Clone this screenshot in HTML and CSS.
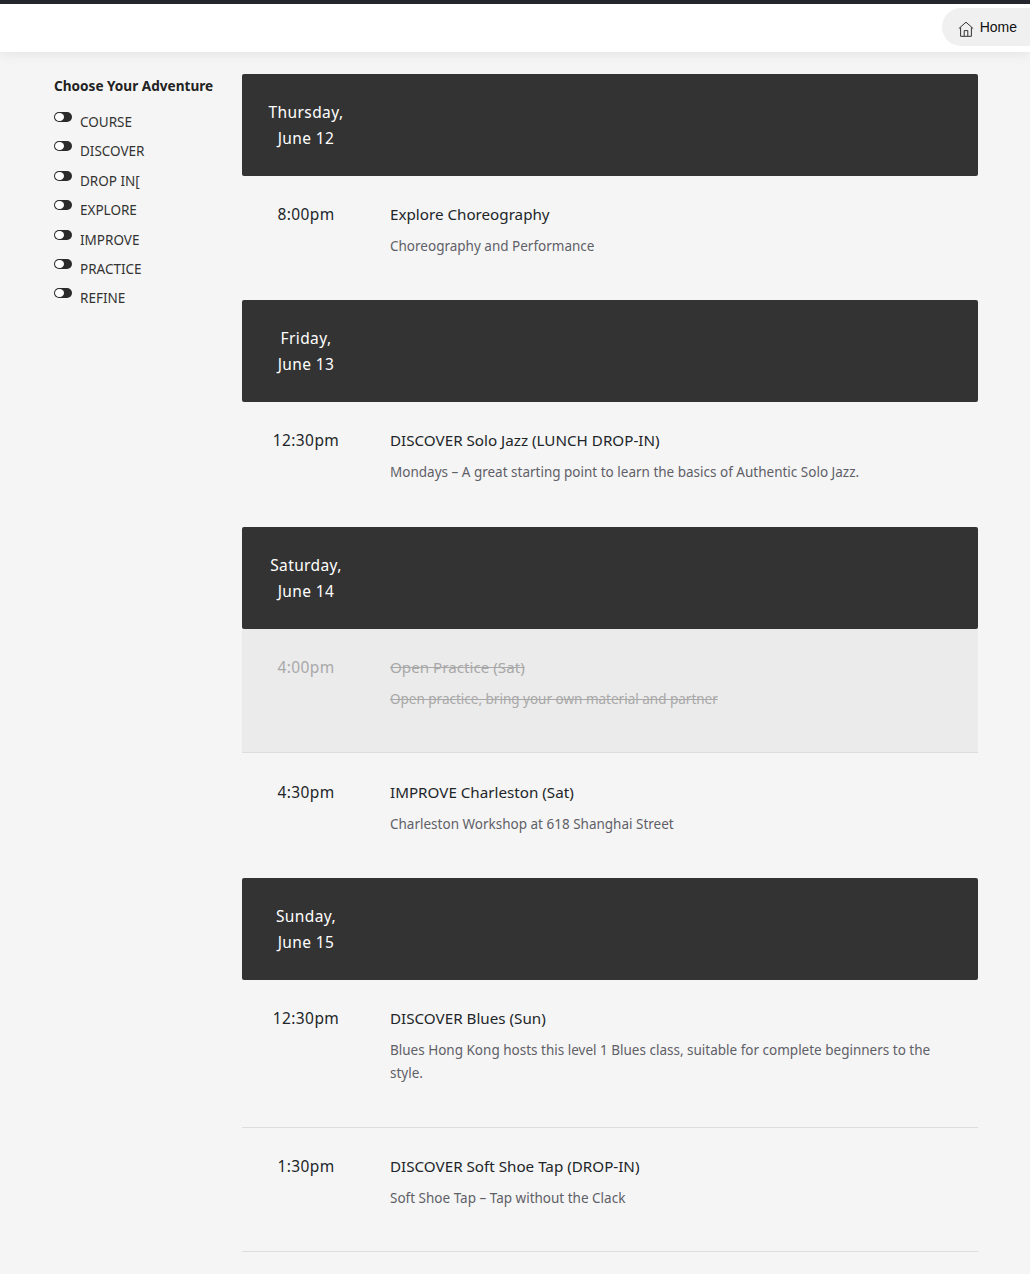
FILE: index.html
```html
<!DOCTYPE html>
<html lang="en">
<head>
    <meta charset="UTF-8">
    <meta name="viewport" content="width=device-width, initial-scale=1.0">
    <title>Schedule</title>
    <link rel="stylesheet" href="styles.css">
</head>
<body>
    <header class="topbar">
        <a href="#" class="home-btn">
            <svg class="home-icon" viewBox="0 0 16 16" width="16" height="16" fill="none" stroke="#333" stroke-width="1">
                <path d="M0.8 7.6 8 1.2l7.2 6.4"/>
                <path d="M2.6 6.4v8.9h10.8V6.4"/>
                <path d="M6.2 15.3V9.6h3.6v5.7"/>
            </svg>
            Home
        </a>
    </header>

    <div class="layout">
        <aside class="filters">
            <h2>Choose Your Adventure</h2>
            <div class="filter"><span class="toggle"></span><span class="filter-name">COURSE</span></div>
            <div class="filter"><span class="toggle"></span><span class="filter-name">DISCOVER</span></div>
            <div class="filter"><span class="toggle"></span><span class="filter-name">DROP IN[</span></div>
            <div class="filter"><span class="toggle"></span><span class="filter-name">EXPLORE</span></div>
            <div class="filter"><span class="toggle"></span><span class="filter-name">IMPROVE</span></div>
            <div class="filter"><span class="toggle"></span><span class="filter-name">PRACTICE</span></div>
            <div class="filter"><span class="toggle"></span><span class="filter-name">REFINE</span></div>
        </aside>

        <main class="schedule">
            <section class="day">
                <div class="day-head"><div class="day-date">Thursday,<br>June 12</div></div>
                <div class="row">
                    <div class="time">8:00pm</div>
                    <div class="info">
                        <div class="title">Explore Choreography</div>
                        <p class="desc">Choreography and Performance</p>
                    </div>
                </div>
            </section>

            <section class="day">
                <div class="day-head"><div class="day-date">Friday,<br>June 13</div></div>
                <div class="row">
                    <div class="time">12:30pm</div>
                    <div class="info">
                        <div class="title">DISCOVER Solo Jazz (LUNCH DROP-IN)</div>
                        <p class="desc">Mondays – A great starting point to learn the basics of Authentic Solo Jazz.</p>
                    </div>
                </div>
            </section>

            <section class="day">
                <div class="day-head"><div class="day-date">Saturday,<br>June 14</div></div>
                <div class="row cancelled">
                    <div class="time">4:00pm</div>
                    <div class="info">
                        <div class="title">Open Practice (Sat)</div>
                        <p class="desc">Open practice, bring your own material and partner</p>
                    </div>
                </div>
                <div class="row">
                    <div class="time">4:30pm</div>
                    <div class="info">
                        <div class="title">IMPROVE Charleston (Sat)</div>
                        <p class="desc">Charleston Workshop at 618 Shanghai Street</p>
                    </div>
                </div>
            </section>

            <section class="day">
                <div class="day-head"><div class="day-date">Sunday,<br>June 15</div></div>
                <div class="row">
                    <div class="time">12:30pm</div>
                    <div class="info">
                        <div class="title">DISCOVER Blues (Sun)</div>
                        <p class="desc">Blues Hong Kong hosts this level 1 Blues class, suitable for complete beginners to the style.</p>
                    </div>
                </div>
                <div class="row ruled">
                    <div class="time">1:30pm</div>
                    <div class="info">
                        <div class="title">DISCOVER Soft Shoe Tap (DROP-IN)</div>
                        <p class="desc">Soft Shoe Tap – Tap without the Clack</p>
                    </div>
                </div>
            </section>
        </main>
    </div>
</body>
</html>
```

FILE: styles.css
```css
body {
    margin: 0;
    background-color: #f5f5f5;
    font-family: "Noto Sans", "Open Sans", Arial, sans-serif;
    color: #212529;
}
.topbar {
    height: 48px;
    border-top: 4px solid #25252d;
    background-color: #fff;
    box-shadow: 0 2px 12px rgba(0, 0, 0, 0.08);
    display: flex;
    justify-content: flex-end;
    align-items: flex-start;
}
.home-btn {
    display: flex;
    align-items: center;
    gap: 6px;
    height: 38px;
    margin-top: 4px;
    padding: 0 13px 0 16px;
    border-radius: 19px 0 0 19px;
    background-color: #f0f0f0;
    color: #111;
    font-family: "Liberation Sans", Arial, sans-serif;
    font-size: 14px;
    text-decoration: none;
}
.home-icon {
    margin-top: 3px;
}
.layout {
    display: flex;
    padding: 21.6px 52px 0 54px;
}
.filters {
    width: 188px;
    flex-shrink: 0;
}
.filters h2 {
    margin: 0 0 15px;
    padding-top: 2.4px;
    font-size: 13.6px;
    line-height: 20px;
    font-weight: 700;
    color: #222;
}
.filter {
    display: flex;
    height: 29.4px;
    align-items: flex-start;
}
.toggle {
    position: relative;
    width: 18px;
    height: 10px;
    margin-top: 1px;
    border-radius: 5px;
    background-color: #2b2b2b;
}
.toggle::before {
    content: "";
    position: absolute;
    top: 1px;
    left: 1px;
    width: 8.5px;
    height: 8px;
    border-radius: 50%;
    background-color: #fff;
}
.filter-name {
    margin-left: 8px;
    padding-top: 2px;
    font-size: 13.5px;
    line-height: 19px;
    color: #333;
}
.schedule {
    flex: 1;
}
.day-head {
    height: 102px;
    display: flex;
    align-items: center;
    border-radius: 2px;
    background-color: #333;
    color: #fff;
}
.day-date {
    width: 128px;
    text-align: center;
    font-size: 15.5px;
    line-height: 26px;
    letter-spacing: 0.4px;
}
.row {
    display: flex;
    padding: 28.2px 0 41.45px;
    border-bottom: 1px solid #ddd;
}
.row:last-child {
    border-bottom-color: transparent;
}
.row.ruled {
    border-bottom-color: #ddd;
}
.time {
    width: 128px;
    flex-shrink: 0;
    text-align: center;
    font-size: 15.5px;
    line-height: 21px;
    letter-spacing: 0.4px;
}
.info {
    margin-left: 20px;
    padding-right: 40px;
}
.title {
    font-size: 15.2px;
    line-height: 21px;
}
.desc {
    margin: 10px 0 0;
    font-size: 13.5px;
    line-height: 23px;
    color: #5f5f68;
}
.cancelled {
    background-color: #ebebeb;
}
.cancelled .time,
.cancelled .title,
.cancelled .desc {
    color: #a8a8a8;
}
.cancelled .title,
.cancelled .desc {
    text-decoration: line-through;
}
```
